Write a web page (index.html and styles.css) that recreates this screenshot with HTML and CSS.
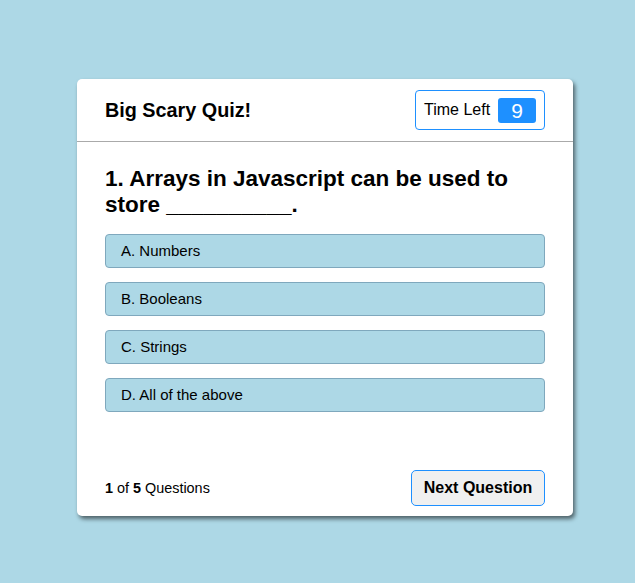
FILE: index.html
```html
<!DOCTYPE html>
<html>
<head>
<meta charset="utf-8">
<link rel="stylesheet" href="styles.css">
</head>
<body>
<div class="card">
  <header class="card-head">
    <h1 class="title">Big Scary Quiz!</h1>
    <div class="timer"><span class="timer-label">Time Left</span><span class="timer-value">9</span></div>
  </header>
  <section class="question">
    <h2 class="q-text">1. Arrays in Javascript can be used to store __________.</h2>
    <div class="options">
      <div class="option">A. Numbers</div>
      <div class="option">B. Booleans</div>
      <div class="option">C. Strings</div>
      <div class="option">D. All of the above</div>
    </div>
  </section>
  <footer class="card-foot">
    <div class="count"><b>1</b> of <b>5</b> Questions</div>
    <button class="next">Next Question</button>
  </footer>
</div>
</body>
</html>
```
FILE: styles.css
```css
html, body {
  margin: 0;
  padding: 0;
}
body {
  background: #add8e6;
  font-family: "Liberation Sans", Arial, sans-serif;
  color: #000;
  height: 583px;
}
.card {
  margin: 79px 0 0 77px;
  width: 496px;
  background: #fff;
  border-radius: 5px;
  box-shadow: 2px 3px 4px rgba(0,0,0,0.55);
}
.card-head {
  height: 63px;
  box-sizing: border-box;
  border-bottom: 1px solid #aaa;
  display: flex;
  align-items: center;
  justify-content: space-between;
  padding: 0 28px;
}
.title {
  margin: 0;
  font-size: 19.8px;
  font-weight: bold;
}
.timer {
  display: flex;
  align-items: center;
  border: 1px solid #1e90ff;
  border-radius: 4px;
  height: 40px;
  box-sizing: border-box;
  padding: 0 8px 0 8px;
  width: 130px;
  justify-content: space-between;
}
.timer-label {
  font-size: 16px;
}
.timer-value {
  background: #1e90ff;
  color: #fff;
  font-size: 21px;
  width: 38px;
  height: 25px;
  line-height: 25px;
  text-align: center;
  border-radius: 3px;
}
.question {
  padding: 24px 28px 0;
}
.q-text {
  margin: 0 0 16px;
  font-size: 22.5px;
  line-height: 26px;
  font-weight: bold;
}
.options {
  display: flex;
  flex-direction: column;
  gap: 14px;
}
.option {
  height: 34px;
  box-sizing: border-box;
  background: #add8e6;
  border: 1px solid #7fa8bd;
  border-radius: 4px;
  font-size: 15px;
  line-height: 31px;
  padding-left: 15px;
}
.card-foot {
  display: flex;
  justify-content: space-between;
  align-items: center;
  padding: 58px 28px 10px;
}
.count {
  font-size: 14.4px;
}
.next {
  font-family: "Liberation Sans", Arial, sans-serif;
  font-size: 16px;
  font-weight: bold;
  background: #f0f0f0;
  border: 1px solid #1e90ff;
  border-radius: 5px;
  height: 36px;
  width: 134px;
  padding: 0;
  color: #000;
}
```
